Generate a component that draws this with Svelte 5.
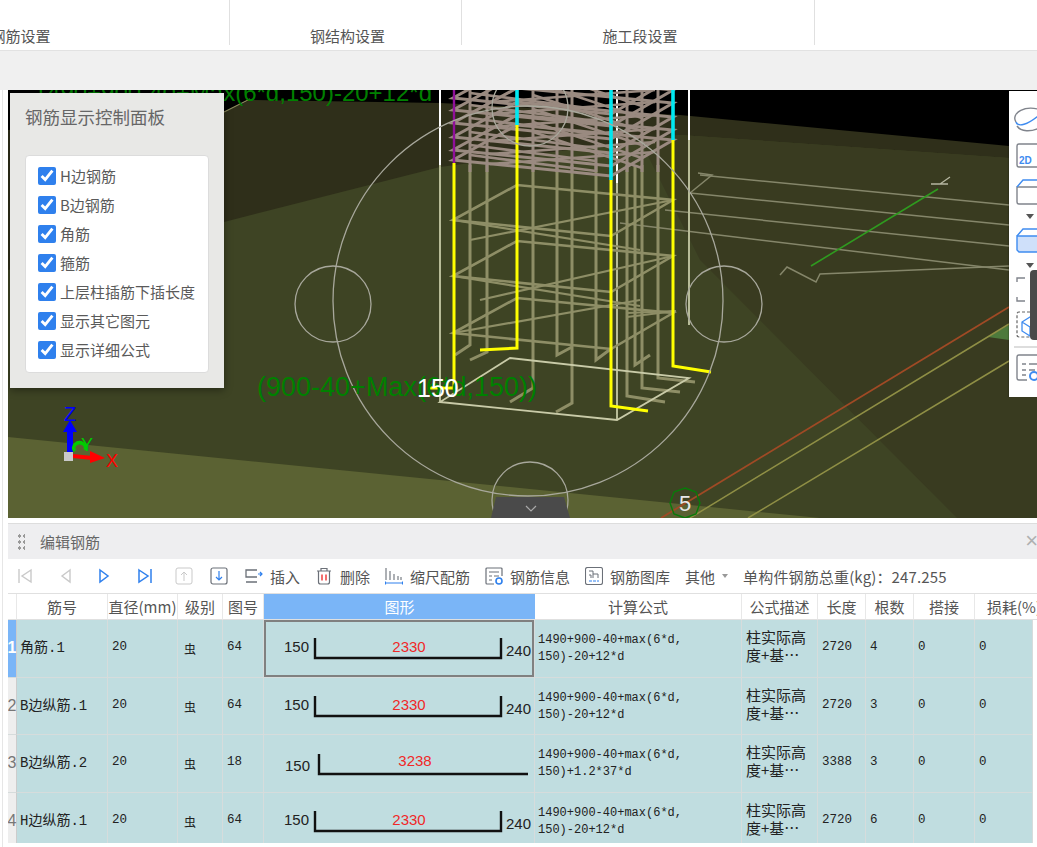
<script>
  const tabs = [
    { label: '钢筋设置', cls: 'first' },
    { label: '钢结构设置', cls: 'second' },
    { label: '施工段设置', cls: 'third' }
  ];

  const checks = ['H边钢筋', 'B边钢筋', '角筋', '箍筋', '上层柱插筋下插长度', '显示其它图元', '显示详细公式'];

  const columns = ['', '筋号', '直径(mm)', '级别', '图号', '图形', '计算公式', '公式描述', '长度', '根数', '搭接', '损耗(%)'];

  const F1 = ['1490+900-40+max(6*d,', '150)-20+12*d'];
  const F2 = ['1490+900-40+max(6*d,', '150)+1.2*37*d'];
  const rows = [
    { name: '角筋.1', shape: '64', straight: false, mid: '2330', formula: F1, len: '2720', count: '4' },
    { name: 'B边纵筋.1', shape: '64', straight: false, mid: '2330', formula: F1, len: '2720', count: '3' },
    { name: 'B边纵筋.2', shape: '18', straight: true, mid: '3238', formula: F2, len: '3388', count: '3' },
    { name: 'H边纵筋.1', shape: '64', straight: false, mid: '2330', formula: F1, len: '2720', count: '6' }
  ];

  // rebar cage, in page coordinates
  const stirrup = (y) => `M453 ${y}L611 ${y + 16}L673 ${y - 20}L517 ${y - 35}Z`;
  const upperLevels = [98, 110, 123, 137, 150, 160];
  const lowerLevels = [220, 276, 333];
  const bars = [470, 487, 533, 557, 572, 596, 627, 642, 658];
  const feet = [
    'M470 165V345L455 355', 'M487 165V352L470 360', 'M533 165V388L510 402', 'M557 165V355L572 347',
    'M572 165V403L556 412', 'M596 165V360L612 348', 'M627 165V396L665 402', 'M642 165V388L680 392',
    'M635 165V365L650 355', 'M658 165V378L695 382'
  ];
  const ties = [
    'M453 220L640 250', 'M453 276L640 306', 'M453 333L640 300', 'M470 240L673 200', 'M480 300L673 256',
    'M627 313L676 311', 'M627 317L676 311'
  ];
  const planLines = [
    'M700 175L1009 205', 'M690 193L1009 225', 'M665 210L1009 246', 'M620 223L1009 270',
    'M698 173L712 175L690 193', 'M780 275L787 267L816 282L820 274L1009 266'
  ];
</script>

<div class="page">
  <header class="tabs">
    {#each tabs as tab}
      <div class="tab {tab.cls}">{tab.label}</div>
    {/each}
  </header>

  <div class="band"></div>

  <main class="work">
    <section class="view">
      <svg class="scene" viewBox="8 90 1029 428" width="1029" height="428">
        <rect x="8" y="90" width="1029" height="428" fill="#000" />
        <polygon points="8,130 224,112 250,100 440,103 680,115 1009,146 1037,150 1037,518 8,518" fill="#2f2f1a" />
        <polygon points="8,270 224,222 440,167 680,135 1009,158 1037,160 1037,518 8,518" fill="#3e4424" />
        <polygon points="680,135 1009,158 1037,160 1037,518 957,518 700,260 640,140" fill="#393b20" />
        <polygon points="8,437 520,488 820,518 8,518" fill="#5b6233" />
        <polygon points="988,337 1009,325 1009,340" fill="#4d7a3c" />

        <path d="M661 518L1009 307" stroke="#a04a25" stroke-width="1.8" fill="none" />
        <path d="M690 518L1009 324M748 518L1009 361" stroke="#8f8f45" stroke-width="1.5" fill="none" />
        <path d="M224 112L250 99" stroke="#8f8f60" stroke-width="1.2" />

        <text class="dim top" x="432" y="101" text-anchor="end">1490+900-40+Max(6*d,150)-20+12*d</text>

        {#each planLines as d}
          <path {d} stroke="#85866a" stroke-width="1.5" fill="none" />
        {/each}
        <path d="M811 266L938 189" stroke="#2f9a1f" stroke-width="1.6" />
        <path d="M931 184H948M940 184L950 177" stroke="#b5b6a0" stroke-width="1.3" fill="none" />

        <!-- cage -->
        <path d="M440 90V402M617 90V420M689 90V325" stroke="#b8bc98" stroke-width="2" fill="none" />
        <path d="M440 90V165M617 90V183M689 90V140" stroke="#fff" stroke-width="2" fill="none" />
        {#each lowerLevels as y}
          <path d={stirrup(y)} stroke="#8e8e66" stroke-width="2.6" fill="none" />
        {/each}
        {#each ties as d}
          <path {d} stroke="#8e8e66" stroke-width="2.2" fill="none" />
        {/each}
        {#each feet as d}
          <path {d} stroke="#8e8e66" stroke-width="3" fill="none" />
        {/each}
        <path d="M440 402L617 420L689 378L510 358Z" stroke="#c9cba8" stroke-width="1.8" fill="none" />
        {#each bars as x}
          <path d="M{x} 90V172" stroke="#9a8a80" stroke-width="3" />
        {/each}
        {#each upperLevels as y}
          <path d={stirrup(y)} stroke="#9a8a80" stroke-width="3" fill="none" />
          <path d="M490 {y + 4}L655 {y - 8}M470 {y - 5}L596 {y + 11}M533 {y - 28}L642 {y + 8}" stroke="#9a8a80" stroke-width="2.6" fill="none" />
        {/each}

        <!-- main bars -->
        <path d="M454 163V388H430M517 125V348L480 350M611 180V406L648 411M673 140V366L711 372" stroke="#ff0" stroke-width="3" fill="none" />
        <path d="M454 90V163" stroke="#90109a" stroke-width="2.4" />
        <path d="M517 90V125M611 90V180M673 90V140" stroke="#00e8f0" stroke-width="3.6" />

        <g fill="none" stroke="#a8a89c" stroke-width="1.3">
          <circle cx="528" cy="301" r="195" />
          <circle cx="333" cy="304" r="38" />
          <circle cx="724" cy="304" r="38" />
          <circle cx="530" cy="108" r="38" />
          <circle cx="530" cy="500" r="38" />
        </g>

        <text class="dim" x="257" y="396" textLength="280">(900-40+Max(6*d,150))</text>
        <text class="num" x="417" y="397">150</text>
        <polygon points="685,488 696,492 700,503 696,514 685,518 674,514 670,503 674,492" fill="none" stroke="#0a7a0a" stroke-width="1.4" />
        <text class="five" x="685" y="511" text-anchor="middle">5</text>

        <!-- axes -->
        <path d="M70 456V432" stroke="#00f" stroke-width="6" />
        <polygon points="63,432 70,420 77,432" fill="#00f" />
        <path d="M75 451a6 5 0 1 1 10 -1" stroke="#0c0" stroke-width="3.5" fill="none" />
        <path d="M73 456L92 458" stroke="#f00" stroke-width="4" />
        <polygon points="90,451 105,458 90,463" fill="#f00" />
        <rect x="64" y="452" width="9" height="9" fill="#c9c9c9" />
        <text class="axis" x="64" y="421" fill="#00f">Z</text>
        <text class="axis small" x="81" y="451" fill="#0c0">Y</text>
        <text class="axis small" x="106" y="467" fill="#f00">X</text>

        <!-- collapse handle -->
        <polygon points="496,497 564,497 570,518 491,518" fill="#4a4a4a" />
        <path d="M526 506L531 511L536 506" stroke="#aaa" stroke-width="1.2" fill="none" />
      </svg>

      <aside class="control">
        <h2>钢筋显示控制面板</h2>
        <div class="checks">
          {#each checks as label}
            <label class="check"><input type="checkbox" checked />{label}</label>
          {/each}
        </div>
      </aside>

      <div class="side">
        <svg viewBox="1009 91 28 306" width="28" height="306">
          <g fill="none" stroke="#80848c" stroke-width="1.4">
            <path d="M1040 110a16 10 0 0 0 -24 12" />
            <path d="M1017 126c4 6 14 6 22 2" />
            <path d="M1016 122c2 6 12 2 22 -6" stroke="#3f8cf0" />
            <path d="M1040 144h-21a2 2 0 0 0 -2 2v19a2 2 0 0 0 2 2h21" />
            <path d="M1040 187h-23v15a2 2 0 0 0 2 2h21" />
            <path d="M1017 187l6 -7h17" stroke="#3f8cf0" />
            <path d="M1017 282v-4h8M1017 297v4h8" />
            <path d="M1040 355h-21a2 2 0 0 0 -2 2v21a2 2 0 0 0 2 2h8M1022 364h4M1029 364h10M1022 370h4M1029 370h6M1022 375h4" />
          </g>
          <text class="two" x="1019" y="164">2D</text>
          <polygon points="1017,236 1040,236 1040,252 1019,252 1017,250" fill="#cfe0fa" stroke="#3f8cf0" stroke-width="1.4" />
          <path d="M1017 236l6 -7h17" fill="none" stroke="#3f8cf0" stroke-width="1.4" />
          <polygon points="1026,214 1034,214 1030,219" fill="#555" />
          <polygon points="1026,263 1034,263 1030,268" fill="#555" />
          <path d="M1040 312h-21a2 2 0 0 0 -2 2v21a2 2 0 0 0 2 2h21" fill="none" stroke="#666" stroke-width="1.2" stroke-dasharray="3 2" />
          <path d="M1022 322l8 -5l8 5v9l-8 5l-8 -5zM1022 322l8 5l8 -5M1030 327v9" fill="none" stroke="#3f8cf0" stroke-width="1.3" />
          <path d="M1014 347H1037" stroke="#bbb" />
          <circle cx="1034" cy="376" r="4" fill="none" stroke="#3f8cf0" stroke-width="2" />
        </svg>
      </div>
      <div class="pill"></div>
    </section>

    <section class="editor">
      <div class="title">
        <span class="dots"></span>
        <span class="name">编辑钢筋</span>
        <span class="close">×</span>
      </div>

      <div class="tools">
        <svg class="nav n0" viewBox="0 0 18 18"><path d="M3 2V16M15 3L6 9L15 15Z" fill="none" stroke="#c9c9c9" stroke-width="1.4" /></svg>
        <svg class="nav n1" viewBox="0 0 18 18"><path d="M13 3L5 9L13 15Z" fill="none" stroke="#c9c9c9" stroke-width="1.4" /></svg>
        <svg class="nav n2" viewBox="0 0 18 18"><path d="M5 3L13 9L5 15Z" fill="none" stroke="#2f80ed" stroke-width="1.5" /></svg>
        <svg class="nav n3" viewBox="0 0 18 18"><path d="M15 2V16M3 3L12 9L3 15Z" fill="none" stroke="#2f80ed" stroke-width="1.5" /></svg>
        <svg class="nav n4" viewBox="0 0 18 18"><rect x="1" y="1" width="16" height="16" rx="2" fill="none" stroke="#c9c9c9" /><path d="M9 14V5M6 8L9 5L12 8" fill="none" stroke="#c9c9c9" /></svg>
        <svg class="nav n5" viewBox="0 0 18 18"><rect x="1" y="1" width="16" height="16" rx="2" fill="none" stroke="#6b7078" stroke-width="1.2" /><path d="M9 4V13M6 10L9 13L12 10" fill="none" stroke="#2f80ed" stroke-width="1.2" /></svg>

        <span class="tool ins">
          <svg viewBox="0 0 18 18"><path d="M12 3H1V10H12M1 15H12" fill="none" stroke="#6b7078" stroke-width="1.3" /><path d="M13 7H17M15 5L17 7L15 9" fill="none" stroke="#2f80ed" stroke-width="1.2" /></svg>
          插入
        </span>
        <span class="tool">
          <svg viewBox="0 0 18 18"><path d="M2 4H16M6 4V1.5H12V4M3.5 4V15a2 2 0 0 0 2 2H12.500a2 2 0 0 0 2 -2V4" fill="none" stroke="#6b7078" stroke-width="1.2" /><path d="M7 7.500V13.500M11 7.500V13.500" stroke="#e33" stroke-width="1.4" /></svg>
          删除
        </span>
        <span class="tool">
          <svg viewBox="0 0 18 18"><path d="M1 1V13M5 4V13M9 7V13M13 9V13M16 10V13" stroke="#6b7078" stroke-width="1.1" /><path d="M0.500 16H17.500M0.500 14.500V17.500M17.500 14.500V17.500" stroke="#2f80ed" stroke-width="1.1" /></svg>
          缩尺配筋
        </span>
        <span class="tool">
          <svg viewBox="0 0 18 18"><path d="M17 9V2a1 1 0 0 0 -1 -1H2a1 1 0 0 0 -1 1V16a1 1 0 0 0 1 1H9M4 5H14M4 9H7M9 9H14M4 13H7" fill="none" stroke="#6b7078" stroke-width="1.2" /><circle cx="14" cy="14" r="3" fill="none" stroke="#2f80ed" stroke-width="1.6" /></svg>
          钢筋信息
        </span>
        <span class="tool">
          <svg viewBox="0 0 18 18"><rect x="0.500" y="0.500" width="17" height="17" rx="2" fill="none" stroke="#6b7078" stroke-width="1.1" /><path d="M4 4H8V11M4 8H6V11M8 7H13V11" fill="none" stroke="#6b7078" /><path d="M4 14H14" stroke="#2f80ed" stroke-dasharray="3 1" /></svg>
          钢筋图库
        </span>
        <span class="other">其他<i></i></span>
        <span class="total">单构件钢筋总重(kg)：247.255</span>
      </div>

      <div class="table">
        <div class="row head">
          {#each columns as col, i}
            <div class="cell" class:active={i === 5} class:last={i === 11}>{col}</div>
          {/each}
        </div>
        <div class="body">
          {#each rows as row, i}
            <div class="row">
              <div class="cell index" class:current={i === 0}>{i + 1}</div>
              <div class="cell mono name-cell">{row.name}</div>
              <div class="cell mono">20</div>
              <div class="cell mono grade">虫</div>
              <div class="cell mono">{row.shape}</div>
              <div class="cell figure" class:picked={i === 0}>
                {#if row.straight}
                  <svg width="271" height="57" viewBox="0 0 271 57">
                    <text x="21" y="36">150</text>
                    <path d="M55 19V39H264" fill="none" stroke="#111" stroke-width="2.4" />
                    <text class="red" x="151" y="31" text-anchor="middle">{row.mid}</text>
                  </svg>
                {:else}
                  <svg width="271" height="57" viewBox="0 0 271 57">
                    <text x="20" y="32">150</text>
                    <path d="M51 18V38H237V18" fill="none" stroke="#111" stroke-width="2.4" />
                    <text class="red" x="145" y="32" text-anchor="middle">{row.mid}</text>
                    <text x="242" y="36">240</text>
                  </svg>
                {/if}
              </div>
              <div class="cell mono formula">{row.formula[0]}<br />{row.formula[1]}</div>
              <div class="cell desc">柱实际高<br />度+基⋯</div>
              <div class="cell mono">{row.len}</div>
              <div class="cell mono">{row.count}</div>
              <div class="cell mono">0</div>
              <div class="cell mono">0</div>
            </div>
          {/each}
        </div>
      </div>
    </section>
  </main>
</div>

<style>
  :global(body) {
    margin: 0;
    background: #fff;
  }

  .page {
    width: 1037px;
    height: 847px;
    overflow: hidden;
    display: flex;
    flex-direction: column;
    font-family: "Noto Sans CJK SC", "Liberation Sans", sans-serif;
    color: #555;
  }

  .tabs {
    height: 50px;
    flex-shrink: 0;
    display: flex;
    border-bottom: 1px solid #e2e2e2;
    box-sizing: content-box;
  }

  .tab {
    height: 45px;
    box-sizing: border-box;
    padding-top: 26px;
    font-size: 15px;
    line-height: 20px;
    text-align: center;
    border-right: 1px solid #e0e0e0;
    flex-shrink: 0;
    white-space: nowrap;
  }

  .first { margin-left: -186px; width: 416px; padding-right: 2px; }
  .second { width: 232px; padding-left: 4px; }
  .third { width: 353px; padding-left: 4px; }

  .band {
    height: 39px;
    flex-shrink: 0;
    background: #f0f0f0;
  }

  .work {
    flex: 1;
    min-height: 0;
    padding-left: 8px;
    display: flex;
    flex-direction: column;
    background: linear-gradient(90deg, #fff 2px, #e6e6e6 2px, #e6e6e6 3px, #fff 3px);
  }

  .view {
    height: 428px;
    flex-shrink: 0;
    position: relative;
    overflow: hidden;
  }

  .scene {
    display: block;
  }

  .scene text {
    font-family: "Liberation Sans", sans-serif;
  }

  .dim {
    font-size: 27px;
    fill: #008000;
  }

  .dim.top {
    font-size: 24px;
  }

  .num {
    font-size: 25px;
    fill: #fff;
  }

  .five {
    font-size: 22px;
    fill: #e8e8e8;
  }

  .axis {
    font-size: 20px;
  }

  .axis.small {
    font-size: 18px;
  }

  .control {
    position: absolute;
    left: 2px;
    top: 3px;
    width: 214px;
    height: 295px;
    box-sizing: border-box;
    padding: 0 15px;
    background: #e8e8e6;
    box-shadow: 0 2px 8px rgba(0, 0, 0, 0.4);
  }

  .control h2 {
    margin: 12px 0 0;
    height: 50px;
    font-size: 17.5px;
    line-height: 24px;
    font-weight: 400;
    color: #666;
  }

  .checks {
    height: 218px;
    box-sizing: border-box;
    padding: 5px 12px;
    background: #fff;
    border: 1px solid #dcdcdc;
    border-radius: 4px;
    display: flex;
    flex-direction: column;
  }

  .check {
    height: 29px;
    flex-shrink: 0;
    display: flex;
    align-items: center;
    gap: 4px;
    font-size: 15px;
    color: #5a5a5a;
    white-space: nowrap;
  }

  .check input {
    width: 18px;
    height: 18px;
    margin: 0;
    accent-color: #2f80ed;
  }

  .side {
    position: absolute;
    right: 0;
    top: 1px;
    width: 28px;
    height: 306px;
    background: #fff;
    box-shadow: -1px 0 1px rgba(0, 0, 0, 0.15);
  }

  .side svg {
    display: block;
  }

  .two {
    font-family: "Liberation Sans", sans-serif;
    font-size: 10px;
    font-weight: 700;
    fill: #3f8cf0;
  }

  .pill {
    position: absolute;
    right: 0;
    top: 180px;
    width: 7px;
    height: 70px;
    background: #4a4a4a;
    border-radius: 4px 0 0 4px;
  }

  .editor {
    flex: 1;
    min-height: 0;
    margin-top: 5px;
    background: #fff;
    display: flex;
    flex-direction: column;
  }

  .title {
    height: 36px;
    flex-shrink: 0;
    box-sizing: border-box;
    background: #eeeef0;
    border-top: 1px solid #ddd;
    display: flex;
    align-items: center;
    position: relative;
  }

  .dots {
    width: 8px;
    height: 17px;
    margin-left: 9px;
    background-image: radial-gradient(circle, #999 1.5px, transparent 1.6px);
    background-size: 5px 6px;
  }

  .name {
    margin-left: 15px;
    font-size: 15px;
    color: #666;
  }

  .close {
    position: absolute;
    right: -1px;
    top: 5px;
    font-size: 22px;
    line-height: 24px;
    color: #b0b0b0;
    font-family: "Liberation Sans", sans-serif;
  }

  .tools {
    height: 34px;
    flex-shrink: 0;
    display: flex;
    align-items: center;
    font-size: 15px;
    color: #555;
    white-space: nowrap;
  }

  .nav {
    width: 18px;
    height: 18px;
    flex-shrink: 0;
  }

  .n0 { margin-left: 8px; }
  .n1 { margin-left: 23px; }
  .n2 { margin-left: 20px; }
  .n3 { margin-left: 23px; }
  .n4 { margin-left: 21px; }
  .n5 { margin-left: 17px; }

  .tool {
    display: flex;
    align-items: center;
    gap: 7px;
    margin-left: 15px;
  }

  .tool.ins {
    margin-left: 17px;
  }

  .tool svg {
    width: 18px;
    height: 18px;
    flex-shrink: 0;
  }

  .other {
    margin-left: 15px;
    display: flex;
    align-items: center;
  }

  .other i {
    margin-left: 7px;
    border: 3px solid transparent;
    border-top: 4px solid #999;
    border-bottom: 0;
  }

  .total {
    margin-left: 15px;
    letter-spacing: 0.15px;
  }

  .table {
    flex: 1;
    min-height: 0;
    display: flex;
    flex-direction: column;
    border-top: 1px solid #e0e0e0;
  }

  .row {
    display: grid;
    grid-template-columns: 9px 91px 70px 45px 41px 271px 207px 76px 48px 48px 61px 58px;
    height: 57.5px;
  }

  .row.head {
    height: 26px;
    flex-shrink: 0;
  }

  .head .cell {
    display: flex;
    align-items: center;
    justify-content: center;
    font-size: 15px;
    color: #555;
    border-right: 1px solid #e8e8e8;
    border-bottom: 1px solid #e0e0e0;
    white-space: nowrap;
    box-sizing: border-box;
  }

  .head .active {
    background: #7ab5f7;
    color: #fff;
    border-right: 0;
  }

  .head .last {
    justify-content: flex-start;
    padding-left: 12px;
    border: 0;
    border-bottom: 1px solid #e0e0e0;
    width: 62px;
  }

  .body {
    height: 223px;
    overflow: hidden;
  }

  .body .cell {
    background: #c0dde0;
    border-right: 1px solid #d6dcdc;
    border-bottom: 1px solid #d6dcdc;
    box-sizing: border-box;
    display: flex;
    align-items: center;
    padding: 0 0 2px 4px;
    color: #222;
    min-width: 0;
  }

  .mono {
    font-family: "Liberation Mono", "Noto Sans CJK SC", monospace;
    font-size: 12.5px;
  }

  .body .name-cell {
    font-size: 14px;
    white-space: nowrap;
    padding: 0 0 4px 3px;
  }

  .body .grade {
    font-size: 12px;
    padding: 2px 0 0 6px;
  }

  .body .index {
    background: #eee;
    color: #777;
    font-family: "Liberation Sans", sans-serif;
    font-size: 16px;
    padding: 0;
    justify-content: center;
    border-right: 1px solid #ccc;
  }

  .body .index.current {
    background: #7ab5f7;
    color: #fff;
    font-weight: 700;
  }

  .body .figure {
    padding: 0;
    display: block;
    overflow: hidden;
  }

  .body .figure.picked {
    box-shadow: inset 0 0 0 2px #808080;
  }

  .figure svg {
    display: block;
  }

  .figure text {
    font-family: "Liberation Sans", sans-serif;
    font-size: 15px;
    fill: #222;
  }

  .figure text.red {
    fill: #f02828;
  }

  .body .formula {
    display: block;
    padding: 12px 0 0 3px;
    font-size: 12px;
    line-height: 17px;
    white-space: nowrap;
  }

  .body .desc {
    font-size: 15px;
    line-height: 18px;
    padding-bottom: 4px;
  }
</style>
